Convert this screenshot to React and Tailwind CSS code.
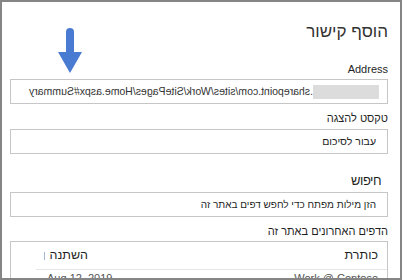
import React from "react";

const font = "font-['Liberation_Sans','DejaVu_Sans',sans-serif]";

function Field({ children, className = "" }) {
  return (
    <div className={`h-[25px] border border-[#c6c6c6] bg-white flex items-center px-[9px] ${className}`}>
      {children}
    </div>
  );
}

export default function App() {
  return (
    <div
      dir="rtl"
      className={`relative w-[402px] h-[280px] overflow-hidden bg-white border-2 border-[#858585] ${font} text-[#1f1f1f]`}
    >
      {/* annotation arrow */}
      <svg className="absolute left-[54px] top-[26px]" width="28" height="47" viewBox="0 0 28 47">
        <path d="M10 4 a4 4 0 0 1 8 0 V24 H26 L14 45 L2 24 H10 Z" fill="#4a7bd2" />
      </svg>

      <div className="flex flex-col pl-[8px] pr-[12px] pt-[20px]">
        <h1 className="text-[17px] leading-[20px] font-light text-[#333]">הוסף קישור</h1>

        <label className="mt-[20px] text-[11px] leading-[14px] -ml-[2px]">Address</label>
        <Field className="mt-[3px] h-[24px] pl-[10px] pr-[8px]">
          <div dir="ltr" className="flex-1 flex items-center -scale-x-100 text-[10.5px] text-[#333] whitespace-nowrap overflow-hidden">
            <span className="w-[66px] h-[14px] bg-[#dcdcdc] shrink-0" />
            <span>.sharepoint.com/sites/Work/SitePages/Home.aspx#Summary</span>
          </div>
        </Field>

        <label className="mt-[7px] text-[11px] leading-[14px]">טקסט להצגה</label>
        <Field className="mt-[4px] pr-[11px]">
          <span className="text-[10.5px]">עבור לסיכום</span>
        </Field>

        <h2 className="mt-[18px] text-[13px] leading-[17px] pr-[7px] tracking-[-0.5px]">חיפוש</h2>
        <Field className="mt-[3px] pr-[11px]">
          <span className="text-[10px]">הזן מילות מפתח כדי לחפש דפים באתר זה</span>
        </Field>

        <label className="mt-[7px] text-[11px] leading-[14px]">הדפים האחרונים באתר זה</label>
        <div className="mt-[3px] h-[60px] border border-[#c6c6c6] flex flex-col">
          <div className="flex items-center h-[28px] pr-[9px] ml-[25px] border-b border-[#e6e6e6] text-[12.5px]">
            <span className="flex-1">כותרת</span>
            <span className="w-[30px]">השתנה</span>
            <span className="w-px h-[8px] bg-[#9fb8d6] mr-[13px] ml-[8px]" />
          </div>
          <div className="flex items-center h-[16px] pr-[9px] pl-[36px] text-[11px] text-[#555]">
            <span className="flex-1">Work @ Contoso</span>
            <span dir="ltr">Aug 12, 2019</span>
          </div>
        </div>
      </div>
    </div>
  );
}
